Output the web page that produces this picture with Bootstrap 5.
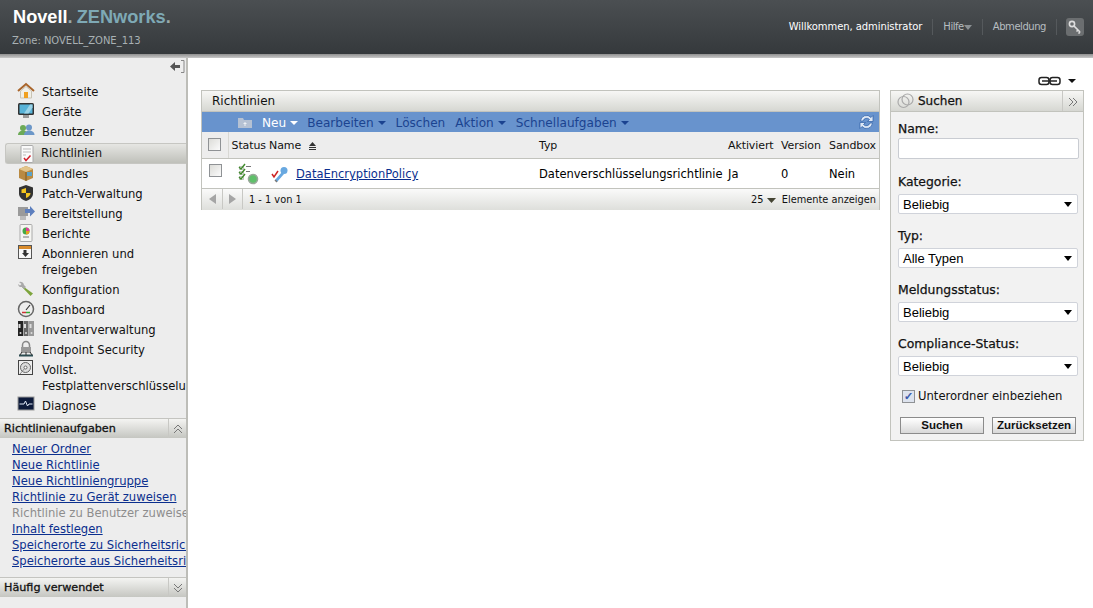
<!DOCTYPE html>
<html lang="de"><head><meta charset="utf-8"><title>Novell ZENworks</title>
<link href="https://cdn.jsdelivr.net/npm/bootstrap@5.3.0/dist/css/bootstrap.min.css" rel="stylesheet">
<style>
html,body{height:608px;overflow:hidden;background:#fff}
body{font-family:"DejaVu Sans",sans-serif;font-size:11.6px;color:#000;line-height:16px}
.zhead{height:54px;background:linear-gradient(#4b4f52,#35393c);color:#fff}
.zshade{height:4px;background:linear-gradient(#8f8f8f,#c8c8c8)}
.zbrand{padding:7px 0 0 13px}
.zlogo{font-family:"Liberation Sans",sans-serif;font-weight:700;font-size:18.2px;line-height:20px;word-spacing:-1px}
.zlogo b{color:#7ea9b5;font-weight:700}
.zlogo i{font-style:normal;color:#9aa}
.zzone{color:#a9b1b4;font-size:10px;line-height:14px;margin:7px 0 0 -1px;letter-spacing:-.02px}
.ztop{font-size:10px;letter-spacing:-.45px;padding-right:9px}
.ztop span{padding:0 10px;border-right:1px solid #55595c;line-height:16px;color:#b7bec1}
.ztop .zwel{color:#fff;letter-spacing:-.08px}
.zkey{width:18px;height:18px;border-radius:3px;background:#6b6e70;margin-left:9px}
.zbody{height:550px}
.zside{width:188px;flex:none;background:#ededed;border-right:2px solid #bdbdb8;overflow:hidden;height:550px}
.zcollapse{height:24px;padding:1px 1px 0 0}
.znav{list-style:none;margin:0;padding:0}
.znav li{display:flex;padding:2px 0 2px 17px;white-space:nowrap;min-height:20px;color:#111;width:186px}
.znav li svg{flex:none;width:18px;height:18px;margin-right:7px;margin-top:-2px}
.znav li.zsel{margin:1px 0 0 5px;width:181px;padding:2px 0 2px 12px;height:21px;min-height:20px;background:linear-gradient(#e6e6e3,#bfc0ba);border:1px solid #c6c6c2;border-right:0;border-radius:3px 0 0 3px;line-height:14px}
.znav li.zsel svg{margin-right:5px;margin-top:-1px}
.zsec{height:20px;border-top:1px solid #c4c4c0;background:linear-gradient(#f4f4f2,#c5c6c1);font-size:11.2px;-webkit-text-stroke:.3px #111;padding-left:4px;line-height:19px;color:#111;margin-top:2px;width:186px}
.zsec em{font-style:normal;width:18px;border-left:1px solid #c8c8c4;text-align:center;height:19px;-webkit-text-stroke:0}
.zlinks{list-style:none;margin:0;padding:4px 0 0 12px;height:137px;white-space:nowrap}
.zlinks li{height:16px;line-height:15px}
.zlinks a,.ztbl a{color:#0b2f8e;text-decoration:underline}
.zlinks .zoff{color:#8d8d8d}
.zmain{padding:32px 9px 0 13px;min-width:0;position:relative}
.zlnk{position:absolute;right:15px;top:18px;width:42px;height:10px}
.zpanel{width:679px;border:1px solid #c2c3bd;height:120px}
.ztitle{height:21px;background:linear-gradient(#f7f7f5,#d6d7d2);border-bottom:1px solid #c2c3bd;padding-left:10px;line-height:20px;font-size:12px;color:#111}
.zbar{height:20px;background:#6893cd;color:#1b4390;font-size:12.1px;line-height:18px;padding-left:35px;padding-right:5px;font-weight:500}
.zbar span{margin-right:10px;white-space:nowrap;padding-top:2px}
.zbar .zneu{color:#fff;margin-left:9px;margin-right:9px}
.zbar span i{display:inline-block;border:4px solid transparent;border-top:4px solid currentColor;border-bottom:0;margin-left:4px;vertical-align:2px}
.ztbl{table-layout:fixed;width:677px;border-collapse:collapse}
.ztbl th,.ztbl td{padding:0 0 0 3px;white-space:nowrap;font-size:11px;overflow:visible}
.ztbl th{height:26px;background:#ededed;border-bottom:1px solid #c2c3bd;font-weight:500;letter-spacing:-.1px;color:#111;padding-top:2px}
.ztbl td{height:30px;border-bottom:1px solid #c2c3bd;font-size:11.5px;padding-top:2px}
.ztbl .zck{border-right:1px solid #d8d8d4;text-align:center;padding:0}
.ztbl td.zck{border-right:0;vertical-align:top;padding-top:3px}
.zstat{padding-left:7px}
.zbox{display:inline-block;width:13px;height:13px;border:1px solid #8f9295;background:linear-gradient(135deg,#dcdcd8,#fbfbfb);vertical-align:middle}
.zpager{height:21px;background:linear-gradient(#fafafa,#dedfdb);font-size:9.8px;line-height:20px;padding-right:3px;color:#111}
.zpager em{font-style:normal;width:21px;text-align:center;border-right:1px solid #c8c8c4;height:20px;display:flex;align-items:center;justify-content:center}
.zpager em:nth-child(2){width:20px}
.zpager span{padding-top:2px}
.zpager .zcount{padding-left:6px}
.zsearch{width:194px;margin-left:10px;border:1px solid #c2c3bd;background:#f2f2f2;height:351px;flex:none}
.zshead{height:21px;background:linear-gradient(#f7f7f5,#d6d7d2);border-bottom:1px solid #c2c3bd;font-size:12px;-webkit-text-stroke:.25px #111;line-height:20px;padding-left:6px;color:#111}
.zshead em{font-style:normal;width:21px;height:20px;border-left:1px solid #c8c8c4;text-align:center;color:#777;-webkit-text-stroke:0}
.zform{padding:8px 4px 0 7px}
.zform label{display:block;font-size:12.4px;-webkit-text-stroke:.25px #111;height:22px;line-height:19px;color:#111;margin:0}
.zform label:first-child{height:18px;line-height:17px}
.zinp{width:181px;height:21px;background:#fff;border:1px solid #c9ccd2;border-radius:2px;margin-bottom:13px}
.zsel2{width:180px;height:20px;background:#fff;border:1px solid #d0d3da;border-radius:2px;font-family:"Liberation Sans",sans-serif;font-size:13px;line-height:18px;padding:1px 5px 0 4px;margin-bottom:12px;color:#000}
.zsel2 i{border:4px solid transparent;border-top:5px solid #000;border-bottom:0}
.zchk{padding-left:4px;height:16px;font-size:11.6px;color:#111}
.zchk span{width:13px;height:13px;border:1px solid #8f9295;background:#dde3ee;color:#2a4fa8;font-size:11px;line-height:11px;text-align:center;margin-right:3px;-webkit-text-stroke:.4px #2a4fa8}
.zbtns{margin-top:13px;padding-left:2px;gap:8px}
.zbtn{width:84px;height:17px;border:1px solid #8b8b8b;background:linear-gradient(#fff,#d8d8d8);font-family:"Liberation Sans",sans-serif;font-weight:700;font-size:11.5px;line-height:15px;text-align:center;color:#111}
</style></head><body>
<header class="zhead d-flex justify-content-between">
 <div class="zbrand"><div class="zlogo">Novell<i>.</i> <b>ZENworks<i>.</i></b></div><div class="zzone">Zone: NOVELL_ZONE_113</div></div>
 <div class="ztop d-flex align-items-center">
  <span class="zwel">Willkommen, administrator</span><span>Hilfe<svg width="8" height="5" viewBox="0 0 8 5"><path d="M0 0h8L4 5z" fill="#8b9194"/></svg></span><span>Abmeldung</span>
  <div class="zkey d-flex align-items-center justify-content-center"><svg width="14" height="14" viewBox="0 0 14 14"><circle cx="4" cy="4" r="2.6" fill="none" stroke="#ddd" stroke-width="1.6"/><path d="M6 6l6 6M10 10l-1.500 1.500M12 12l-1.500 1.500" stroke="#ddd" stroke-width="1.700"/></svg></div>
 </div>
</header>
<div class="zshade"></div>
<div class="zbody d-flex">
 <aside class="zside">
  <div class="zcollapse d-flex justify-content-end"><svg width="16" height="15" viewBox="0 0 16 15"><path d="M1 7.500L6 3v3h5v3H6v3z" fill="#555"/><path d="M12 1.500h3v12h-3" fill="#eee" stroke="#888"/></svg></div>
  <ul class="znav">
   <li><svg viewBox="0 0 18 18"><path d="M1 9l8-7 8 7" fill="none" stroke="#a9652b" stroke-width="2"/><path d="M3.500 9L9 4.500 14.500 9v7h-11z" fill="#f1efe8" stroke="#c9c4b5"/><rect x="7" y="10" width="4" height="6" fill="#f0a020"/></svg>Startseite</li>
   <li><svg viewBox="0 0 18 18"><rect x="1" y="1" width="16" height="12" rx="1.500" fill="#333"/><rect x="2.500" y="2.500" width="13" height="9" fill="#58b3d8"/><path d="M7 11.500l6-9h2.500v3l-4 6z" fill="#9ad3e8"/><rect x="6" y="13" width="6" height="3" fill="#999"/></svg>Geräte</li>
   <li><svg viewBox="0 0 18 18"><circle cx="6" cy="6" r="3" fill="#6caa57"/><path d="M1 13c0-6 10-6 10 0z" fill="#6caa57"/><circle cx="12" cy="5.500" r="3" fill="#6c97c8"/><path d="M7 13c0-6 10.500-6 10.500 0z" fill="#6c97c8"/></svg>Benutzer</li>
   <li class="zsel"><svg viewBox="0 0 18 18"><rect x="3" y="0.500" width="12" height="17" rx="1" fill="#fafafa" stroke="#aaa"/><path d="M5 4h8M5 7h8M5 10h3" stroke="#bbb"/><path d="M6 13l2 2.500 4.500-5" fill="none" stroke="#d2202c" stroke-width="1.500"/></svg>Richtlinien</li>
   <li><svg viewBox="0 0 18 18"><path d="M2 5l7-3 7 3v9l-7 3-7-3z" fill="#b98a42"/><path d="M2 5l7 3 7-3-7-3z" fill="#e2c48a"/><path d="M9 8v9" stroke="#7a5821"/><rect x="10" y="8" width="5" height="4" fill="#5aa2c8"/></svg>Bundles</li>
   <li><svg viewBox="0 0 18 18"><path d="M9 1l7 2.500v6c0 4-3.500 6.500-7 7.500-3.500-1-7-3.500-7-7.500v-6z" fill="#333"/><path d="M9 4v5H4.500V5.500zM9 9h4.500c0 2.500-2 4-4.500 5z" fill="#f3c41d"/></svg>Patch-Verwaltung</li>
   <li><svg viewBox="0 0 18 18"><rect x="1" y="3" width="10" height="9" fill="#9a9a9a"/><rect x="3" y="12" width="6" height="4" fill="#bbb"/><path d="M8 5h5V2l5 5.500-5 5V9H8z" fill="#5d7fbe"/></svg>Bereitstellung</li>
   <li><svg viewBox="0 0 18 18"><rect x="3" y="0.500" width="12" height="17" rx="1" fill="#f5f5f2" stroke="#aaa"/><circle cx="9" cy="7" r="3.500" fill="#45a845"/><path d="M9 7V3.500A3.500 3.500 0 0 1 12.500 7z" fill="#e23c9a"/><path d="M9 7h3.500A3.500 3.500 0 0 1 9 10.500z" fill="#e8a020"/><path d="M6 13h6" stroke="#777"/></svg>Berichte</li>
   <li class="text-wrap"><svg viewBox="0 0 18 18"><rect x="1.500" y="1.500" width="13" height="13" fill="#f7f7f7" stroke="#555"/><rect x="2" y="2" width="12" height="3" fill="#d98b2b"/><path d="M6.500 6h3v3H12l-3.500 4L5 9h1.500z" fill="#333"/></svg><span>Abonnieren und<br>freigeben</span></li>
   <li><svg viewBox="0 0 18 18"><path d="M7 7l9 6.500-2.500 2.500L5 7z" fill="#7da43c"/><path d="M2 2a3.500 3.500 0 0 1 5 3l2 2-2 2-2-2a3.500 3.500 0 0 1-4-3l2 1.500L4.500 4z" fill="#a9a9a9"/></svg>Konfiguration</li>
   <li><svg viewBox="0 0 18 18"><circle cx="9" cy="9" r="7.500" fill="#eee" stroke="#666" stroke-width="1.500"/><path d="M9 10l4-5" stroke="#333" stroke-width="1.200"/><path d="M5 12.500h4" stroke="#c33" stroke-width="1.500"/><path d="M9 12.500h4" stroke="#3a3" stroke-width="1.500"/></svg>Dashboard</li>
   <li><svg viewBox="0 0 18 18"><rect x="1" y="1" width="5" height="15" fill="#222"/><rect x="6.500" y="1" width="5" height="15" fill="#666"/><rect x="12" y="1" width="5" height="15" fill="#999"/><path d="M2.500 4v4M8 4v4M13.500 4v4" stroke="#ddd" stroke-width="2"/><circle cx="3.500" cy="13" r="1" fill="#ddd"/><circle cx="9" cy="13" r="1" fill="#ddd"/><circle cx="14.500" cy="13" r="1" fill="#ddd"/></svg>Inventarverwaltung</li>
   <li><svg viewBox="0 0 18 18"><path d="M5.500 8V5a3.500 3.500 0 0 1 7 0v3" fill="none" stroke="#888" stroke-width="1.500"/><rect x="4" y="7" width="10" height="6" fill="#999"/><path d="M2 15.500h14" stroke="#2c4d52" stroke-width="2"/><path d="M5 12l-2 3M9 12v3M13 12l2 3" stroke="#333"/></svg>Endpoint Security</li>
   <li><svg viewBox="0 0 18 18"><rect x="1.500" y="0.500" width="14" height="14" fill="#eee" stroke="#444"/><circle cx="8.500" cy="7.500" r="5" fill="#ddd" stroke="#666"/><circle cx="8.500" cy="7.500" r="1.500" fill="#fff" stroke="#666"/><path d="M3 14l5-6" stroke="#888"/></svg><span>Vollst.<br>Festplattenverschlüsselung</span></li>
   <li><svg viewBox="0 0 18 18"><rect x="1" y="1" width="16" height="13" fill="#0d1a3a" stroke="#999"/><path d="M2.500 8H7l1.500-3 2 5 1.500-2h3.500" fill="none" stroke="#dfe7f5"/></svg>Diagnose</li>
  </ul>
  <div class="zsec d-flex justify-content-between"><span>Richtlinienaufgaben</span><em><svg width="12" height="12" viewBox="0 0 12 12"><path d="M2 6l4-4 4 4M2 10l4-4 4 4" fill="none" stroke="#777"/></svg></em></div>
  <ul class="zlinks">
   <li><a href="#">Neuer Ordner</a></li><li><a href="#">Neue Richtlinie</a></li><li><a href="#">Neue Richtliniengruppe</a></li><li><a href="#">Richtlinie zu Gerät zuweisen</a></li><li class="zoff">Richtlinie zu Benutzer zuweisen</li><li><a href="#">Inhalt festlegen</a></li><li><a href="#">Speicherorte zu Sicherheitsrichtlinie</a></li><li><a href="#">Speicherorte aus Sicherheitsrichtlinie</a></li>
  </ul>
  <div class="zsec d-flex justify-content-between"><span>Häufig verwendet</span><em><svg width="12" height="12" viewBox="0 0 12 12"><path d="M2 2l4 4 4-4M2 6l4 4 4-4" fill="none" stroke="#777"/></svg></em></div>
 </aside>
 <main class="zmain flex-grow-1 d-flex align-items-start">
  <svg class="zlnk" viewBox="0 0 42 10"><rect x="3" y="1.500" width="10" height="7" rx="2.500" fill="none" stroke="#222" stroke-width="1.500"/><rect x="14" y="1.500" width="10" height="7" rx="2.500" fill="none" stroke="#222" stroke-width="1.500"/><path d="M6 5h15" stroke="#222" stroke-width="1.500"/><path d="M32 3h8l-4 4z" fill="#111"/></svg>
  <section class="zpanel flex-none">
   <div class="ztitle">Richtlinien</div>
   <div class="zbar d-flex align-items-center">
    <svg width="16" height="13" viewBox="0 0 16 13"><path d="M1 2h5l1 2h8v8H1z" fill="#b5c1d3"/><path d="M8 6l-2 2h1.500v2h1V8H10z" fill="#eef1f5"/></svg>
    <span class="zneu">Neu<i></i></span><span>Bearbeiten<i></i></span><span>Löschen</span><span>Aktion<i></i></span><span>Schnellaufgaben<i></i></span>
    <svg class="ms-auto" width="15" height="16" viewBox="0 0 15 16"><path d="M1.500 7A6 6 0 0 1 12 3.500L14 1.500V7.500H8.500l2-2A3.800 3.800 0 0 0 4 7z" fill="#dfe9f6" stroke="#2d5da5" stroke-width=".7"/><path d="M13.500 9A6 6 0 0 1 3 12.500L1 14.500V8.500h5.500l-2 2A3.800 3.800 0 0 0 11 9z" fill="#dfe9f6" stroke="#2d5da5" stroke-width=".7"/></svg>
   </div>
   <table class="ztbl">
    <colgroup><col style="width:26px"><col style="width:38px"><col style="width:270px"><col style="width:189px"><col style="width:53px"><col style="width:48px"><col></colgroup>
    <thead><tr><th class="zck"><span class="zbox"></span></th><th>Status</th><th>Name <svg class="ms-1" width="9" height="8" viewBox="0 0 9 8"><path d="M4.500 0L8 4H1z" fill="#333"/><path d="M1 5.500h7M1 7.500h7" stroke="#333"/></svg></th><th>Typ</th><th>Aktiviert</th><th>Version</th><th>Sandbox</th></tr></thead>
    <tbody><tr><td class="zck"><span class="zbox"></span></td><td colspan="2"><div class="zstat d-flex align-items-center"><svg width="22" height="22" viewBox="0 0 22 22"><path d="M1.500 3.500h4v3h-4zM1.500 8.500h4v3h-4zM1.500 13.500h4v3h-4z" fill="#eef2ea" stroke="#9aa69a" stroke-width=".6"/><path d="M1 4l2 2 4-5M1 9l2 2 4-5M1 14l2 2 4-5" fill="none" stroke="#3f8a2a" stroke-width="1.400"/><path d="M8 3.500h5M8 8.500h4" stroke="#777"/><circle cx="15" cy="16" r="4.500" fill="#5fc06a" stroke="#9aa89a" stroke-width="1.600"/></svg><svg style="margin:0 7px 0 11px" width="18" height="17" viewBox="0 0 18 17"><path d="M1 8l2 3 4-6" fill="none" stroke="#c22" stroke-width="1.500"/><circle cx="13" cy="4.500" r="3.500" fill="#68a8e0"/><path d="M11 6l-7 8 2 2 7-8" fill="#68a8e0"/><path d="M4 14l2 2" stroke="#777" stroke-width="1.500"/></svg><a href="#">DataEncryptionPolicy</a></div></td><td>Datenverschlüsselungsrichtlinie</td><td>Ja</td><td>0</td><td>Nein</td></tr></tbody>
   </table>
   <div class="zpager d-flex align-items-center">
    <em><svg width="7" height="10" viewBox="0 0 7 10"><path d="M7 0v10L0 5z" fill="#a5a5a5"/></svg></em><em><svg width="7" height="10" viewBox="0 0 7 10"><path d="M0 0v10l7-5z" fill="#a5a5a5"/></svg></em><span class="zcount">1 - 1 von 1</span>
    <span class="ms-auto">25 <svg width="9" height="5" viewBox="0 0 9 5"><path d="M0 0h9L4.500 5z" fill="#443"/></svg>&nbsp; Elemente anzeigen</span>
   </div>
  </section>
  <aside class="zsearch">
   <div class="zshead d-flex justify-content-between"><span class="d-flex align-items-center gap-1"><svg width="17" height="16" viewBox="0 0 17 16"><circle cx="6.500" cy="9" r="5.500" fill="none" stroke="#aaa" stroke-width="1.200"/><circle cx="10.500" cy="6.500" r="5.500" fill="none" stroke="#aaa" stroke-width="1.200"/></svg>Suchen</span><em><svg width="12" height="12" viewBox="0 0 12 12"><path d="M2 2l4 4-4 4M6 2l4 4-4 4" fill="none" stroke="#777"/></svg></em></div>
   <div class="zform">
    <label>Name:</label><div class="zinp"></div>
    <label>Kategorie:</label><div class="zsel2 d-flex justify-content-between align-items-center">Beliebig<i></i></div>
    <label>Typ:</label><div class="zsel2 d-flex justify-content-between align-items-center">Alle Typen<i></i></div>
    <label>Meldungsstatus:</label><div class="zsel2 d-flex justify-content-between align-items-center">Beliebig<i></i></div>
    <label>Compliance-Status:</label><div class="zsel2 d-flex justify-content-between align-items-center">Beliebig<i></i></div>
    <div class="zchk d-flex align-items-center"><span>✓</span>Unterordner einbeziehen</div>
    <div class="zbtns d-flex"><div class="zbtn">Suchen</div><div class="zbtn">Zurücksetzen</div></div>
   </div>
  </aside>
 </main>
</div>
</body></html>
